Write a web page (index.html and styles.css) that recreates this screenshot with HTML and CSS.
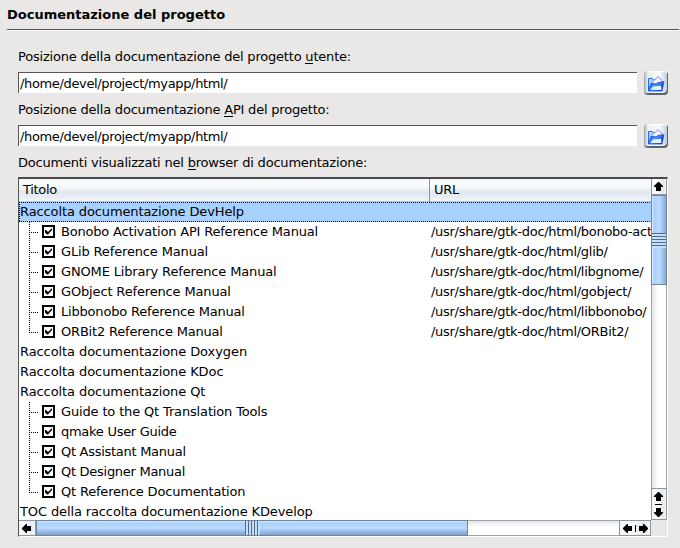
FILE: index.html
```html
<!DOCTYPE html>
<html lang="it">
<head>
<meta charset="utf-8">
<title>Documentazione del progetto</title>
<link rel="stylesheet" href="styles.css">
</head>
<body>
<svg class="defs" width="0" height="0">
  <defs>
    <linearGradient id="folderBlue" x1="0" y1="0" x2="1" y2=".5">
      <stop offset="0" stop-color="#0a4ae0"/><stop offset=".5" stop-color="#48a0fa"/><stop offset="1" stop-color="#0b3ccc"/>
    </linearGradient>
    <symbol id="folder" viewBox="0 0 24 24">
      <path d="M4.500 7.500h4l1 1.500h7v10.500h-12z" fill="#a9d8ff" stroke="#2a6ae6"/>
      <path d="M7.500 12l6.500-6.500 4 4v3.500h-10z" fill="#f6f5ff" stroke="#8482d4"/>
      <path d="M4.500 20l2.500-7.500 5 .5 2-1.500 6-.8-2 9.300z" fill="url(#folderBlue)" stroke="#1644d8" stroke-width=".8"/>
      <path d="M6.500 19l2.500-3.500 8-.7.5 4.200z" fill="#e6efff"/>
    </symbol>
    <symbol id="check" viewBox="0 0 13 13">
      <path d="M1 1h11v11H1z" fill="#fff" stroke="#000" stroke-width="2"/>
      <path d="M3 5h1l2 2 4-4v2L6 9.500H5L3 7.500z" fill="#000"/>
    </symbol>
    <symbol id="arrow" viewBox="0 0 9 9">
      <path d="M4 0h1l4 4v1H7v4H2V5H0V4z" fill="#000"/>
    </symbol>
  </defs>
</svg>
<main class="page">
  <h1 class="title">Documentazione del progetto</h1>
  <section class="form">
    <label class="label">Posizione della documentazione del progetto <u>u</u>tente:</label>
    <div class="field"><div class="input">/home/devel/project/myapp/html/</div><div class="browse"><svg width="24" height="24"><use href="#folder"/></svg></div></div>
    <label class="label">Posizione della documentazione <u>A</u>PI del progetto:</label>
    <div class="field"><div class="input">/home/devel/project/myapp/html/</div><div class="browse"><svg width="24" height="24"><use href="#folder"/></svg></div></div>
    <label class="label">Documenti visualizzati nel <u>b</u>rowser di documentazione:</label>
    <div class="list">
      <div class="view">
        <div class="head"><div class="th first">Titolo</div><div class="th">URL</div></div>
        <div class="row selected">Raccolta documentazione DevHelp</div>
        <div class="row child"><i class="branch"></i><svg class="box"><use href="#check"/></svg><span class="name">Bonobo Activation API Reference Manual</span><span class="url">/usr/share/gtk-doc/html/bonobo-activation/</span></div>
        <div class="row child"><i class="branch"></i><svg class="box"><use href="#check"/></svg><span class="name normal">GLib Reference Manual</span><span class="url">/usr/share/gtk-doc/html/glib/</span></div>
        <div class="row child"><i class="branch"></i><svg class="box"><use href="#check"/></svg><span class="name normal">GNOME Library Reference Manual</span><span class="url">/usr/share/gtk-doc/html/libgnome/</span></div>
        <div class="row child"><i class="branch"></i><svg class="box"><use href="#check"/></svg><span class="name normal">GObject Reference Manual</span><span class="url">/usr/share/gtk-doc/html/gobject/</span></div>
        <div class="row child"><i class="branch"></i><svg class="box"><use href="#check"/></svg><span class="name">Libbonobo Reference Manual</span><span class="url">/usr/share/gtk-doc/html/libbonobo/</span></div>
        <div class="row child"><i class="branch last"></i><svg class="box"><use href="#check"/></svg><span class="name">ORBit2 Reference Manual</span><span class="url">/usr/share/gtk-doc/html/ORBit2/</span></div>
        <div class="row">Raccolta documentazione Doxygen</div>
        <div class="row">Raccolta documentazione KDoc</div>
        <div class="row">Raccolta documentazione Qt</div>
        <div class="row child"><i class="branch"></i><svg class="box"><use href="#check"/></svg><span class="name normal">Guide to the Qt Translation Tools</span></div>
        <div class="row child"><i class="branch"></i><svg class="box"><use href="#check"/></svg><span class="name tight">qmake User Guide</span></div>
        <div class="row child"><i class="branch"></i><svg class="box"><use href="#check"/></svg><span class="name tight">Qt Assistant Manual</span></div>
        <div class="row child"><i class="branch"></i><svg class="box"><use href="#check"/></svg><span class="name tight">Qt Designer Manual</span></div>
        <div class="row child"><i class="branch last"></i><svg class="box"><use href="#check"/></svg><span class="name">Qt Reference Documentation</span></div>
        <div class="row toc">TOC della raccolta documentazione KDevelop</div>
      </div>
      <div class="vbar">
        <div class="btn up"><svg class="arrow"><use href="#arrow"/></svg></div>
        <div class="thumb vthumb"><i class="grip vgrip"></i></div>
        <div class="track vtrack"></div>
        <div class="btn vpair"><svg class="arrow"><use href="#arrow"/></svg><i class="vsep"></i><svg class="arrow down"><use href="#arrow"/></svg></div>
      </div>
      <div class="hbar">
        <div class="btn left-btn"><svg class="arrow left"><use href="#arrow"/></svg></div>
        <div class="thumb hthumb"><i class="grip hgrip"></i></div>
        <div class="track htrack"></div>
        <div class="btn hpair"><svg class="arrow left"><use href="#arrow"/></svg><i class="hsep"></i><svg class="arrow right"><use href="#arrow"/></svg></div>
      </div>
      <div class="corner"></div>
    </div>
  </section>
</main>
</body>
</html>
```
FILE: styles.css
```css
* { box-sizing: border-box; }
body {
  margin: 0;
  background: #e9e8e6;
  color: #000;
  font: 13px/20px "DejaVu Sans", sans-serif;
  overflow: hidden;
}
svg { display: block; flex: none; }
.defs { position: absolute; }
.page { width: 680px; height: 548px; padding: 4px 1px 0 7px; }
.title {
  margin: 0;
  height: 27px;
  font-size: 13px;
  line-height: 21px;
  font-weight: bold;
  border-bottom: 1px solid #fff;
  box-shadow: inset 0 -1px #555;
}
.form { padding: 16px 11px 0; }
.label { display: block; height: 24px; line-height: 20px; letter-spacing: -.2px; }
.label u { text-decoration: none; box-shadow: inset 0 -1px #000; display: inline-block; height: 14px; line-height: 14px; }
.field { display: flex; justify-content: space-between; height: 29px; }
.input {
  width: 619px;
  height: 21px;
  margin-top: 1px;
  padding-left: 1px;
  line-height: 21px;
  letter-spacing: -.35px;
  background: #fff;
  border: solid #555;
  border-width: 1px 0 0 1px;
}
.browse {
  width: 24px;
  height: 24px;
  border-radius: 4px;
  background: linear-gradient(90deg, #aeb6c2 0, #eaf0f6 4px, #f8fcff 15px, #d8e4f0 20px, #b4bfcc 100%);
  box-shadow: inset 1px 0 #a4a9b0, inset -1px -2px #5d6369, inset 0 1px #fff;
}
.list {
  display: grid;
  grid-template-columns: 632px 16px;
  grid-template-rows: 341px 16px;
  width: 650px;
  height: 360px;
  border: 1px solid #fff;
  border-left-color: #555;
  border-top: 2px solid #484b4e;
}
.view { background: #fff; overflow: hidden; white-space: nowrap; }
.head {
  display: flex;
  height: 23px;
  background: linear-gradient(#f1f6fb, #fbfdff 5px, #f1f6f9 9px, #e0e7ee 13px, #e9eff5 19px, #f5f9fc);
  box-shadow: inset 0 -1px #c6c8ca;
}
.th { padding-left: 4px; line-height: 22px; letter-spacing: -.3px; }
.first { width: 411px; border-right: 1px solid #8d9399; }
.row { height: 20px; padding-left: 1px; line-height: 19px; letter-spacing: -.08px; }
.toc { letter-spacing: -.12px; }
.selected {
  letter-spacing: -.11px;
  background:
    repeating-linear-gradient(90deg, #000 0 1px, transparent 1px 2px) 0 0 / 100% 1px no-repeat,
    repeating-linear-gradient(90deg, #000 0 1px, transparent 1px 2px) 0 100% / 100% 1px no-repeat,
    repeating-linear-gradient(#000 0 1px, transparent 1px 2px) 0 0 / 1px 100% no-repeat,
    #a9d1ff;
}
.child { display: flex; padding-left: 10px; }
.branch {
  flex: none;
  width: 9px;
  height: 20px;
  margin-right: 4px;
  background:
    repeating-linear-gradient(#000 0 1px, transparent 1px 2px) 0 0 / 1px 100% no-repeat,
    repeating-linear-gradient(90deg, #000 0 1px, transparent 1px 2px) 0 10px / 9px 1px no-repeat;
}
.last {
  background:
    repeating-linear-gradient(#000 0 1px, transparent 1px 2px) 0 0 / 1px 11px no-repeat,
    repeating-linear-gradient(90deg, #000 0 1px, transparent 1px 2px) 0 10px / 9px 1px no-repeat;
}
.box { width: 13px; height: 13px; margin: 3px 6px 0 0; }
.name { width: 370px; flex: none; letter-spacing: -.19px; }
.normal { letter-spacing: -.15px; }
.tight { letter-spacing: -.28px; }
.url { flex: 1; min-width: 0; overflow: hidden; letter-spacing: -.29px; }
.vbar, .hbar { display: flex; }
.vbar { flex-direction: column; }
.btn {
  display: flex;
  align-items: center;
  justify-content: center;
  flex: none;
  border: 1px solid #8e959b;
  background: linear-gradient(90deg, #f1f6fb, #fcfeff 30%, #e2e9f0 80%, #f3f7fa);
}
.up { height: 16px; border-top: 0; }
.left-btn { width: 17px; border-left: 0; padding-right: 2px; }
.vpair { height: 32px; flex-direction: column; gap: 3px; }
.hpair { width: 32px; gap: 3px; }
.vbar .btn { padding-right: 1px; }
.arrow { width: 9px; height: 9px; }
.down { transform: rotate(180deg); }
.left { transform: rotate(-90deg); }
.right { transform: rotate(90deg); }
.vsep { width: 7px; height: 1px; background: #000; }
.hsep { width: 1px; height: 7px; background: #000; }
.thumb { display: flex; align-items: center; justify-content: center; flex: none; border: 1px solid #71869b; }
.vthumb {
  height: 90px;
  background: linear-gradient(90deg, #e0efff 0, #a7ceff 2px, #bddbff 7px, #a6c9f2 10px, #86a9d2 100%);
}
.hthumb {
  width: 432px;
  background: linear-gradient(#d3e8ff 0, #a9d0ff 2px, #bddbff 7px, #9ec2ed 10px, #7f9fc4 100%);
}
.vgrip { width: 14px; height: 15px; background: repeating-linear-gradient(#536b82 0 1px, #c5e0fb 1px 3px); }
.hgrip { width: 15px; height: 14px; background: repeating-linear-gradient(90deg, #536b82 0 1px, #c5e0fb 1px 3px); }
.track { flex: 1; border: 1px solid #a0a3a6; }
.vtrack { border-width: 0 1px; background: linear-gradient(90deg, #e2e5eb, #fff 6px); }
.htrack { border-width: 1px 0; background: linear-gradient(#e2e5eb, #fff 6px); }
```
